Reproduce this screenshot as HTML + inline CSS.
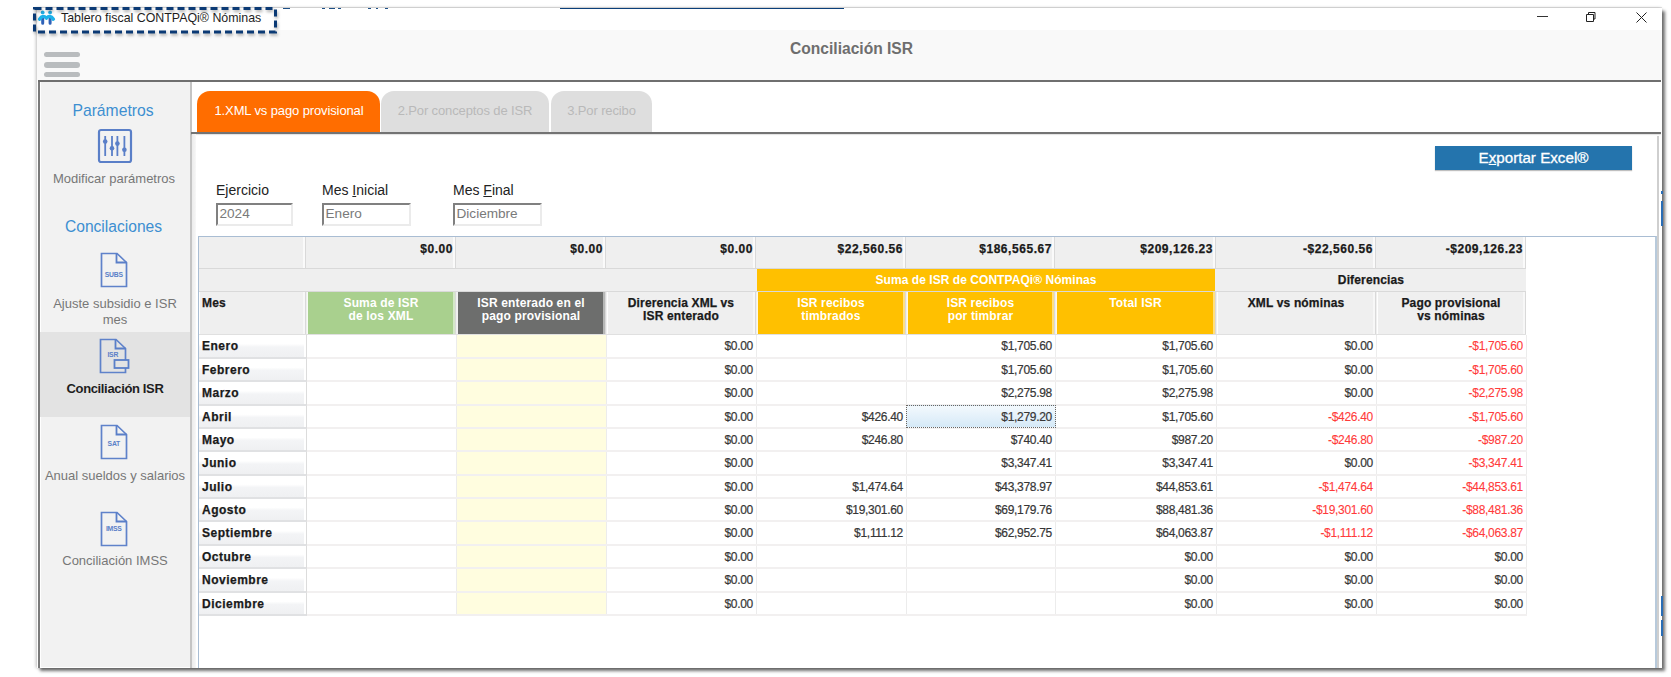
<!DOCTYPE html><html><head><meta charset="utf-8"><style>
*{margin:0;padding:0;box-sizing:border-box}
html,body{width:1671px;height:677px;overflow:hidden;background:#fff;font-family:"Liberation Sans",sans-serif;position:relative}
.a{position:absolute}
.win{left:37px;top:8px;width:1625px;height:660px;background:#fff;box-shadow:-1px 0 3px rgba(0,0,0,.25),3px 3px 3px rgba(0,0,0,.55)}
.hdr{left:37px;top:30px;width:1625px;height:50px;background:#f9f9f9}
.bar{left:44px;width:36px;height:5.5px;background:#b9bcbe;border-radius:3px}
.title{left:790px;top:39.5px;font-size:15.6px;font-weight:bold;color:#6e6e6e;letter-spacing:0;white-space:nowrap}
.topline{left:38px;top:80px;width:1623px;height:2px;background:#6f6f6f}
.side{left:38px;top:82px;width:154px;height:586px;background:#f2f2f2;border-left:2px solid #7a7a7a;border-right:2px solid #c4c4c4;box-shadow:inset 1px 0 0 #fff,inset 0 -1px 0 #fff}
.sel{left:40px;top:332px;width:150px;height:85px;background:#e3e3e3}
.st{white-space:nowrap;text-align:center;color:#777;font-size:13px}
.blue{color:#3d8fd1}
.tab{top:91px;height:41px;border-radius:13px 13px 0 0;font-size:13px;text-align:center;line-height:39px;white-space:nowrap;letter-spacing:-.12px}
.tabline{left:191px;top:132px;width:1470px;height:2px;background:#737373;box-shadow:0 1px 1px rgba(0,0,0,.12)}
.lbl{font-size:14px;color:#222;white-space:nowrap}
.inp{height:23px;border-top:2px solid #808080;border-left:2px solid #808080;border-right:2px solid #ebebeb;border-bottom:2px solid #ebebeb;background:#fff;font-size:13.6px;color:#7a7a7a;padding-left:1.5px;line-height:17px;white-space:nowrap}
.btn{left:1435px;top:146px;width:197px;height:24px;background:#2474ad;color:#fff;font-size:15.2px;-webkit-text-stroke:.3px #fff;text-align:center;line-height:24px;box-shadow:0 1px 1px rgba(0,0,0,.25)}
.grid{left:198px;top:236px;width:1459px;height:432px;border-top:1px solid #a9bdd3;border-left:1px solid #a9bdd3;border-right:2px solid #b8cadb}
.c{position:absolute;white-space:nowrap;overflow:hidden}
.hb{font-weight:bold;font-size:12px;letter-spacing:.55px;color:#1a1a1a;-webkit-text-stroke:.25px}
.d{font-size:12px;letter-spacing:-.3px;color:#363636;-webkit-text-stroke:.2px;text-align:right;padding-right:3px}
.neg{color:#ff3a3a;-webkit-text-stroke:.1px}
.mc{background:linear-gradient(#fff 0,#fff 40%,#f3f4f6 55%,#eff0f2 100%);border-right:1px solid #dcdcdc;border-bottom:2px solid #e0e1e3;box-shadow:inset -2px 0 0 #fff}
</style></head><body>
<div class="a" style="left:37px;top:7px;width:1625px;height:1px;background:#e6e6e6"></div>
<div class="a win"></div>
<div class="a" style="left:560px;top:8px;width:284px;height:1px;background:#0a3f7a"></div>
<div class="a" style="left:283px;top:8px;width:7px;height:1px;background:#1d4f86"></div>
<div class="a" style="left:322px;top:8px;width:3px;height:1px;background:#1d4f86"></div>
<div class="a" style="left:329px;top:8px;width:6px;height:1px;background:#1d4f86"></div>
<div class="a" style="left:338px;top:8px;width:3px;height:1px;background:#1d4f86"></div>
<div class="a" style="left:368px;top:8px;width:3px;height:1px;background:#1d4f86"></div>
<div class="a" style="left:376px;top:8px;width:2px;height:1px;background:#1d4f86"></div>
<div class="a" style="left:385px;top:8px;width:3px;height:1px;background:#1d4f86"></div>
<div class="a" style="left:61px;top:11px;font-size:12.4px;color:#1e1e1e;white-space:nowrap">Tablero fiscal CONTPAQi® Nóminas</div>
<svg class="a" style="left:35px;top:8px" width="24" height="20" viewBox="0 0 24 20">
<path d="M7.7 9.5V15.2M15.1 9.5V15.2" stroke="#2e62b8" stroke-width="3" stroke-linecap="round"/>
<path d="M4.6 11.2Q7.7 6.2 11.4 10.2Q15.1 6.2 18.4 11.2" fill="none" stroke="#1cb2ea" stroke-width="3.4" stroke-linecap="round" stroke-linejoin="round"/>
<circle cx="7.7" cy="4.4" r="1.9" fill="#22b0e8"/><circle cx="15.1" cy="4.4" r="1.9" fill="#22b0e8"/>
</svg>
<div class="a" style="left:1537px;top:16px;width:11px;height:1px;background:#333"></div>
<svg class="a" style="left:1584px;top:11px" width="12" height="12" viewBox="0 0 12 12"><path d="M2.5 3.5h7v7h-7z M4.5 3.5v-2h6.5v6.5h-1.5" fill="none" stroke="#222" stroke-width="1"/></svg>
<svg class="a" style="left:1636px;top:12px" width="11" height="11" viewBox="0 0 11 11"><path d="M0.5 0.5L10.5 10.5M10.5 0.5L0.5 10.5" stroke="#222" stroke-width="1"/></svg>
<div class="a hdr"></div>
<div class="a bar" style="top:51.8px"></div>
<div class="a bar" style="top:62px"></div>
<div class="a bar" style="top:71.8px"></div>
<div class="a title">Conciliación ISR</div>
<div class="a topline"></div>
<div class="a side"></div>
<div class="a sel"></div>
<div class="a st blue" style="left:38px;width:150px;top:101.5px;font-size:15.7px">Parámetros</div>
<svg class="a" style="left:97px;top:128px" width="36" height="36" viewBox="0 0 36 36">
<rect x="2" y="2" width="32" height="32" rx="2" fill="none" stroke="#5a7fc8" stroke-width="2.2"/>
<g stroke="#5a7fc8" stroke-width="1.8"><path d="M8.2 8v20M15 8v20M20.4 8v20M27.4 8v20"/></g>
<g fill="#5a7fc8"><circle cx="8.2" cy="13.5" r="2.3"/><circle cx="15" cy="20.3" r="2.3"/><circle cx="20.4" cy="15.6" r="2.3"/><circle cx="27.4" cy="21.8" r="2.3"/></g>
</svg>
<div class="a st" style="left:39px;width:150px;top:171px">Modificar parámetros</div>
<div class="a st blue" style="left:38.5px;width:150px;top:218px;font-size:15.6px">Concilaciones</div>
<svg class="a" style="left:100px;top:252px" width="28" height="36" viewBox="0 0 28 36">
<path d="M1.5 1.5H17L26.5 10.5V34.5H1.5Z" fill="none" stroke="#5f82ca" stroke-width="1.7"/>
<path d="M16.5 1.5V10.5H26.5" fill="none" stroke="#5a7fc8" stroke-width="1.8"/>
<text x="13.8" y="24.5" font-family="Liberation Sans" font-size="6.8" font-weight="bold" letter-spacing="-.2" fill="#5a7fc8" text-anchor="middle">SUBS</text>
</svg>
<div class="a st" style="left:40px;width:150px;top:296px;line-height:15.6px">Ajuste subsidio e ISR<br>mes</div>
<svg class="a" style="left:99px;top:338px" width="32" height="36" viewBox="0 0 32 36">
<path d="M1.5 1.5H17L26.5 10.5V34.5H1.5Z" fill="none" stroke="#5f82ca" stroke-width="1.7"/>
<path d="M16.5 1.5V10.5H26.5" fill="none" stroke="#5a7fc8" stroke-width="1.8"/>
<text x="13.8" y="18.5" font-family="Liberation Sans" font-size="6.8" font-weight="bold" letter-spacing="-.2" fill="#5a7fc8" text-anchor="middle">ISR</text><rect x="15.5" y="22" width="14" height="8" fill="#e3e3e3" stroke="#5a7fc8" stroke-width="1.8"/>
</svg>
<div class="a st" style="left:40px;width:150px;top:381px;font-weight:bold;color:#1e1e1e;letter-spacing:-.35px">Conciliación ISR</div>
<svg class="a" style="left:100px;top:424px" width="28" height="36" viewBox="0 0 28 36">
<path d="M1.5 1.5H17L26.5 10.5V34.5H1.5Z" fill="none" stroke="#5f82ca" stroke-width="1.7"/>
<path d="M16.5 1.5V10.5H26.5" fill="none" stroke="#5a7fc8" stroke-width="1.8"/>
<text x="13.8" y="21.5" font-family="Liberation Sans" font-size="6.8" font-weight="bold" letter-spacing="-.2" fill="#5a7fc8" text-anchor="middle">SAT</text>
</svg>
<div class="a st" style="left:40px;width:150px;top:468px">Anual sueldos y salarios</div>
<svg class="a" style="left:100px;top:511px" width="28" height="36" viewBox="0 0 28 36">
<path d="M1.5 1.5H17L26.5 10.5V34.5H1.5Z" fill="none" stroke="#5f82ca" stroke-width="1.7"/>
<path d="M16.5 1.5V10.5H26.5" fill="none" stroke="#5a7fc8" stroke-width="1.8"/>
<text x="13.8" y="19.8" font-family="Liberation Sans" font-size="6.8" font-weight="bold" letter-spacing="-.2" fill="#5a7fc8" text-anchor="middle">IMSS</text>
</svg>
<div class="a st" style="left:40px;width:150px;top:553px">Conciliación IMSS</div>
<div class="a tab" style="left:197px;width:183px;padding-left:1px;background:#ff6d00;color:#fff">1.XML vs pago provisional</div>
<div class="a tab" style="left:381px;width:168px;background:#dedede;color:#b9b9b9">2.Por conceptos de ISR</div>
<div class="a tab" style="left:551px;width:101px;background:#dedede;color:#b9b9b9">3.Por recibo</div>
<div class="a tabline"></div>
<div class="a" style="left:192px;top:134px;width:4px;height:534px;background:linear-gradient(90deg,#ececec,#f2f2f2 60%,#f8f8f8)"></div>
<div class="a" style="left:1657px;top:136px;width:2px;height:532px;background:#cfcfcf"></div>
<div class="a lbl" style="left:216px;top:182px">E<u>j</u>ercicio</div>
<div class="a lbl" style="left:322px;top:182px">Mes <u>I</u>nicial</div>
<div class="a lbl" style="left:453px;top:182px">Mes <u>F</u>inal</div>
<div class="a inp" style="left:216px;top:203px;width:77px">2024</div>
<div class="a inp" style="left:322px;top:203px;width:89px">Enero</div>
<div class="a inp" style="left:453px;top:203px;width:89px">Diciembre</div>
<div class="a btn">E<u>x</u>portar Excel®</div>
<div class="a grid"></div>
<div class="c" style="left:199px;top:237px;width:1327px;height:97px;background:#efefef"></div>
<div class="c hb" style="left:199px;top:237px;width:107px;height:31px;text-align:right;padding-right:2px;line-height:24px;border-right:1px solid #d9d9d9;box-shadow:inset -2px 0 0 #fafafa"></div>
<div class="c hb" style="left:306px;top:237px;width:150px;height:31px;text-align:right;padding-right:2px;line-height:24px;border-right:1px solid #d9d9d9;box-shadow:inset -2px 0 0 #fafafa">$0.00</div>
<div class="c hb" style="left:456px;top:237px;width:150px;height:31px;text-align:right;padding-right:2px;line-height:24px;border-right:1px solid #d9d9d9;box-shadow:inset -2px 0 0 #fafafa">$0.00</div>
<div class="c hb" style="left:606px;top:237px;width:150px;height:31px;text-align:right;padding-right:2px;line-height:24px;border-right:1px solid #d9d9d9;box-shadow:inset -2px 0 0 #fafafa">$0.00</div>
<div class="c hb" style="left:756px;top:237px;width:150px;height:31px;text-align:right;padding-right:2px;line-height:24px;border-right:1px solid #d9d9d9;box-shadow:inset -2px 0 0 #fafafa">$22,560.56</div>
<div class="c hb" style="left:906px;top:237px;width:149px;height:31px;text-align:right;padding-right:2px;line-height:24px;border-right:1px solid #d9d9d9;box-shadow:inset -2px 0 0 #fafafa">$186,565.67</div>
<div class="c hb" style="left:1055px;top:237px;width:161px;height:31px;text-align:right;padding-right:2px;line-height:24px;border-right:1px solid #d9d9d9;box-shadow:inset -2px 0 0 #fafafa">$209,126.23</div>
<div class="c hb" style="left:1216px;top:237px;width:160px;height:31px;text-align:right;padding-right:2px;line-height:24px;border-right:1px solid #d9d9d9;box-shadow:inset -2px 0 0 #fafafa">-$22,560.56</div>
<div class="c hb" style="left:1376px;top:237px;width:150px;height:31px;text-align:right;padding-right:2px;line-height:24px;border-right:1px solid #d9d9d9;box-shadow:inset -2px 0 0 #fafafa">-$209,126.23</div>
<div class="c" style="left:199px;top:268px;width:1327px;height:1px;background:#d9d9d9"></div>
<div class="c" style="left:199px;top:291px;width:1327px;height:1px;background:#d9d9d9"></div>
<div class="c" style="left:199px;top:334px;width:1327px;height:1px;background:#e0e0e0"></div>
<div class="c hb" style="left:757px;top:269px;width:458px;height:22px;background:#ffc000;color:#fff;text-align:center;line-height:22px;letter-spacing:.05px;-webkit-text-stroke:0">Suma de ISR de CONTPAQi® Nóminas</div>
<div class="c hb" style="left:1216px;top:269px;width:310px;height:22px;text-align:center;line-height:22px;letter-spacing:.15px">Diferencias</div>
<div class="c hb" style="left:199px;top:292px;width:107px;height:42px;background:#efefef;color:#1a1a1a;text-align:left;padding-left:3px;line-height:13.2px;padding-top:5px;letter-spacing:.15px;border-right:1px solid #d9d9d9;box-shadow:inset 1px 0 0 rgba(255,255,255,.9),inset -2px 0 0 rgba(255,255,255,.5);">Mes</div>
<div class="c hb" style="left:307px;top:292px;width:149px;height:42px;background:#a9d08e;color:#fff;text-align:center;line-height:13.2px;padding-top:5px;letter-spacing:.15px;border-right:1px solid #d9d9d9;box-shadow:inset 1px 0 0 rgba(255,255,255,.9),inset -2px 0 0 rgba(255,255,255,.5);-webkit-text-stroke:0;">Suma de ISR<br>de los XML</div>
<div class="c hb" style="left:457px;top:292px;width:149px;height:42px;background:#6d6e6d;color:#fff;text-align:center;line-height:13.2px;padding-top:5px;letter-spacing:.15px;border-right:1px solid #d9d9d9;box-shadow:inset 1px 0 0 rgba(255,255,255,.9),inset -2px 0 0 rgba(255,255,255,.5);-webkit-text-stroke:0;">ISR enterado en el<br>pago provisional</div>
<div class="c hb" style="left:607px;top:292px;width:149px;height:42px;background:#efefef;color:#1a1a1a;text-align:center;line-height:13.2px;padding-top:5px;letter-spacing:.15px;border-right:1px solid #d9d9d9;box-shadow:inset 1px 0 0 rgba(255,255,255,.9),inset -2px 0 0 rgba(255,255,255,.5);">Direrencia XML vs<br>ISR enterado</div>
<div class="c hb" style="left:757px;top:292px;width:149px;height:42px;background:#ffc000;color:#fff;text-align:center;line-height:13.2px;padding-top:5px;letter-spacing:.15px;border-right:1px solid #d9d9d9;box-shadow:inset 1px 0 0 rgba(255,255,255,.9),inset -2px 0 0 rgba(255,255,255,.5);-webkit-text-stroke:0;">ISR recibos<br>timbrados</div>
<div class="c hb" style="left:907px;top:292px;width:148px;height:42px;background:#ffc000;color:#fff;text-align:center;line-height:13.2px;padding-top:5px;letter-spacing:.15px;border-right:1px solid #d9d9d9;box-shadow:inset 1px 0 0 rgba(255,255,255,.9),inset -2px 0 0 rgba(255,255,255,.5);-webkit-text-stroke:0;">ISR recibos<br>por timbrar</div>
<div class="c hb" style="left:1056px;top:292px;width:160px;height:42px;background:#ffc000;color:#fff;text-align:center;line-height:13.2px;padding-top:5px;letter-spacing:.15px;border-right:1px solid #d9d9d9;box-shadow:inset 1px 0 0 rgba(255,255,255,.9),inset -2px 0 0 rgba(255,255,255,.5);-webkit-text-stroke:0;">Total ISR</div>
<div class="c hb" style="left:1217px;top:292px;width:159px;height:42px;background:#efefef;color:#1a1a1a;text-align:center;line-height:13.2px;padding-top:5px;letter-spacing:.15px;border-right:1px solid #d9d9d9;box-shadow:inset 1px 0 0 rgba(255,255,255,.9),inset -2px 0 0 rgba(255,255,255,.5);">XML vs nóminas</div>
<div class="c hb" style="left:1377px;top:292px;width:149px;height:42px;background:#efefef;color:#1a1a1a;text-align:center;line-height:13.2px;padding-top:5px;letter-spacing:.15px;border-right:1px solid #d9d9d9;box-shadow:inset 1px 0 0 rgba(255,255,255,.9),inset -2px 0 0 rgba(255,255,255,.5);">Pago provisional<br>vs nóminas</div>
<div class="c" style="left:307px;top:335px;width:149px;height:279px;background:#fff"></div>
<div class="c" style="left:457px;top:335px;width:149px;height:279px;background:#fffddf"></div>
<div class="c" style="left:607px;top:335px;width:149px;height:279px;background:#fff"></div>
<div class="c" style="left:757px;top:335px;width:149px;height:279px;background:#fff"></div>
<div class="c" style="left:907px;top:335px;width:148px;height:279px;background:#fff"></div>
<div class="c" style="left:1056px;top:335px;width:160px;height:279px;background:#fff"></div>
<div class="c" style="left:1217px;top:335px;width:159px;height:279px;background:#fff"></div>
<div class="c" style="left:1377px;top:335px;width:149px;height:279px;background:#fff"></div>
<div class="c" style="left:456px;top:335px;width:1px;height:281px;background:#ececec"></div>
<div class="c" style="left:606px;top:335px;width:1px;height:281px;background:#ececec"></div>
<div class="c" style="left:756px;top:335px;width:1px;height:281px;background:#ececec"></div>
<div class="c" style="left:906px;top:335px;width:1px;height:281px;background:#ececec"></div>
<div class="c" style="left:1055px;top:335px;width:1px;height:281px;background:#ececec"></div>
<div class="c" style="left:1216px;top:335px;width:1px;height:281px;background:#ececec"></div>
<div class="c" style="left:1376px;top:335px;width:1px;height:281px;background:#ececec"></div>
<div class="c" style="left:1526px;top:335px;width:1px;height:281px;background:#ececec"></div>
<div class="c" style="left:307px;top:357px;width:1220px;height:2px;background:#f2f0f0"></div>
<div class="c hb mc" style="left:199px;top:335px;width:108px;height:24px;padding-left:3px;line-height:23px;letter-spacing:.5px">Enero</div>
<div class="c d" style="left:607px;top:335px;width:149px;height:22px;line-height:23px">$0.00</div>
<div class="c d" style="left:907px;top:335px;width:148px;height:22px;line-height:23px">$1,705.60</div>
<div class="c d" style="left:1056px;top:335px;width:160px;height:22px;line-height:23px">$1,705.60</div>
<div class="c d" style="left:1217px;top:335px;width:159px;height:22px;line-height:23px">$0.00</div>
<div class="c d neg" style="left:1377px;top:335px;width:149px;height:22px;line-height:23px">-$1,705.60</div>
<div class="c" style="left:307px;top:380px;width:1220px;height:2px;background:#f2f0f0"></div>
<div class="c hb mc" style="left:199px;top:359px;width:108px;height:23px;padding-left:3px;line-height:22px;letter-spacing:.5px">Febrero</div>
<div class="c d" style="left:607px;top:359px;width:149px;height:21px;line-height:22px">$0.00</div>
<div class="c d" style="left:907px;top:359px;width:148px;height:21px;line-height:22px">$1,705.60</div>
<div class="c d" style="left:1056px;top:359px;width:160px;height:21px;line-height:22px">$1,705.60</div>
<div class="c d" style="left:1217px;top:359px;width:159px;height:21px;line-height:22px">$0.00</div>
<div class="c d neg" style="left:1377px;top:359px;width:149px;height:21px;line-height:22px">-$1,705.60</div>
<div class="c" style="left:307px;top:404px;width:1220px;height:2px;background:#f2f0f0"></div>
<div class="c hb mc" style="left:199px;top:382px;width:108px;height:24px;padding-left:3px;line-height:23px;letter-spacing:.5px">Marzo</div>
<div class="c d" style="left:607px;top:382px;width:149px;height:22px;line-height:23px">$0.00</div>
<div class="c d" style="left:907px;top:382px;width:148px;height:22px;line-height:23px">$2,275.98</div>
<div class="c d" style="left:1056px;top:382px;width:160px;height:22px;line-height:23px">$2,275.98</div>
<div class="c d" style="left:1217px;top:382px;width:159px;height:22px;line-height:23px">$0.00</div>
<div class="c d neg" style="left:1377px;top:382px;width:149px;height:22px;line-height:23px">-$2,275.98</div>
<div class="c" style="left:307px;top:427px;width:1220px;height:2px;background:#f2f0f0"></div>
<div class="c hb mc" style="left:199px;top:406px;width:108px;height:23px;padding-left:3px;line-height:22px;letter-spacing:.5px">Abril</div>
<div class="c d" style="left:607px;top:406px;width:149px;height:21px;line-height:22px">$0.00</div>
<div class="c d" style="left:757px;top:406px;width:149px;height:21px;line-height:22px">$426.40</div>
<div class="c d" style="left:907px;top:406px;width:148px;height:21px;line-height:22px">$1,279.20</div>
<div class="c d" style="left:1056px;top:406px;width:160px;height:21px;line-height:22px">$1,705.60</div>
<div class="c d neg" style="left:1217px;top:406px;width:159px;height:21px;line-height:22px">-$426.40</div>
<div class="c d neg" style="left:1377px;top:406px;width:149px;height:21px;line-height:22px">-$1,705.60</div>
<div class="c" style="left:307px;top:450px;width:1220px;height:2px;background:#f2f0f0"></div>
<div class="c hb mc" style="left:199px;top:429px;width:108px;height:23px;padding-left:3px;line-height:22px;letter-spacing:.5px">Mayo</div>
<div class="c d" style="left:607px;top:429px;width:149px;height:21px;line-height:22px">$0.00</div>
<div class="c d" style="left:757px;top:429px;width:149px;height:21px;line-height:22px">$246.80</div>
<div class="c d" style="left:907px;top:429px;width:148px;height:21px;line-height:22px">$740.40</div>
<div class="c d" style="left:1056px;top:429px;width:160px;height:21px;line-height:22px">$987.20</div>
<div class="c d neg" style="left:1217px;top:429px;width:159px;height:21px;line-height:22px">-$246.80</div>
<div class="c d neg" style="left:1377px;top:429px;width:149px;height:21px;line-height:22px">-$987.20</div>
<div class="c" style="left:307px;top:474px;width:1220px;height:2px;background:#f2f0f0"></div>
<div class="c hb mc" style="left:199px;top:452px;width:108px;height:24px;padding-left:3px;line-height:23px;letter-spacing:.5px">Junio</div>
<div class="c d" style="left:607px;top:452px;width:149px;height:22px;line-height:23px">$0.00</div>
<div class="c d" style="left:907px;top:452px;width:148px;height:22px;line-height:23px">$3,347.41</div>
<div class="c d" style="left:1056px;top:452px;width:160px;height:22px;line-height:23px">$3,347.41</div>
<div class="c d" style="left:1217px;top:452px;width:159px;height:22px;line-height:23px">$0.00</div>
<div class="c d neg" style="left:1377px;top:452px;width:149px;height:22px;line-height:23px">-$3,347.41</div>
<div class="c" style="left:307px;top:497px;width:1220px;height:2px;background:#f2f0f0"></div>
<div class="c hb mc" style="left:199px;top:476px;width:108px;height:23px;padding-left:3px;line-height:22px;letter-spacing:.5px">Julio</div>
<div class="c d" style="left:607px;top:476px;width:149px;height:21px;line-height:22px">$0.00</div>
<div class="c d" style="left:757px;top:476px;width:149px;height:21px;line-height:22px">$1,474.64</div>
<div class="c d" style="left:907px;top:476px;width:148px;height:21px;line-height:22px">$43,378.97</div>
<div class="c d" style="left:1056px;top:476px;width:160px;height:21px;line-height:22px">$44,853.61</div>
<div class="c d neg" style="left:1217px;top:476px;width:159px;height:21px;line-height:22px">-$1,474.64</div>
<div class="c d neg" style="left:1377px;top:476px;width:149px;height:21px;line-height:22px">-$44,853.61</div>
<div class="c" style="left:307px;top:520px;width:1220px;height:2px;background:#f2f0f0"></div>
<div class="c hb mc" style="left:199px;top:499px;width:108px;height:23px;padding-left:3px;line-height:22px;letter-spacing:.5px">Agosto</div>
<div class="c d" style="left:607px;top:499px;width:149px;height:21px;line-height:22px">$0.00</div>
<div class="c d" style="left:757px;top:499px;width:149px;height:21px;line-height:22px">$19,301.60</div>
<div class="c d" style="left:907px;top:499px;width:148px;height:21px;line-height:22px">$69,179.76</div>
<div class="c d" style="left:1056px;top:499px;width:160px;height:21px;line-height:22px">$88,481.36</div>
<div class="c d neg" style="left:1217px;top:499px;width:159px;height:21px;line-height:22px">-$19,301.60</div>
<div class="c d neg" style="left:1377px;top:499px;width:149px;height:21px;line-height:22px">-$88,481.36</div>
<div class="c" style="left:307px;top:544px;width:1220px;height:2px;background:#f2f0f0"></div>
<div class="c hb mc" style="left:199px;top:522px;width:108px;height:24px;padding-left:3px;line-height:23px;letter-spacing:.5px">Septiembre</div>
<div class="c d" style="left:607px;top:522px;width:149px;height:22px;line-height:23px">$0.00</div>
<div class="c d" style="left:757px;top:522px;width:149px;height:22px;line-height:23px">$1,111.12</div>
<div class="c d" style="left:907px;top:522px;width:148px;height:22px;line-height:23px">$62,952.75</div>
<div class="c d" style="left:1056px;top:522px;width:160px;height:22px;line-height:23px">$64,063.87</div>
<div class="c d neg" style="left:1217px;top:522px;width:159px;height:22px;line-height:23px">-$1,111.12</div>
<div class="c d neg" style="left:1377px;top:522px;width:149px;height:22px;line-height:23px">-$64,063.87</div>
<div class="c" style="left:307px;top:567px;width:1220px;height:2px;background:#f2f0f0"></div>
<div class="c hb mc" style="left:199px;top:546px;width:108px;height:23px;padding-left:3px;line-height:22px;letter-spacing:.5px">Octubre</div>
<div class="c d" style="left:607px;top:546px;width:149px;height:21px;line-height:22px">$0.00</div>
<div class="c d" style="left:1056px;top:546px;width:160px;height:21px;line-height:22px">$0.00</div>
<div class="c d" style="left:1217px;top:546px;width:159px;height:21px;line-height:22px">$0.00</div>
<div class="c d" style="left:1377px;top:546px;width:149px;height:21px;line-height:22px">$0.00</div>
<div class="c" style="left:307px;top:591px;width:1220px;height:2px;background:#f2f0f0"></div>
<div class="c hb mc" style="left:199px;top:569px;width:108px;height:24px;padding-left:3px;line-height:23px;letter-spacing:.5px">Noviembre</div>
<div class="c d" style="left:607px;top:569px;width:149px;height:22px;line-height:23px">$0.00</div>
<div class="c d" style="left:1056px;top:569px;width:160px;height:22px;line-height:23px">$0.00</div>
<div class="c d" style="left:1217px;top:569px;width:159px;height:22px;line-height:23px">$0.00</div>
<div class="c d" style="left:1377px;top:569px;width:149px;height:22px;line-height:23px">$0.00</div>
<div class="c" style="left:307px;top:614px;width:1220px;height:2px;background:#f2f0f0"></div>
<div class="c hb mc" style="left:199px;top:593px;width:108px;height:23px;padding-left:3px;line-height:22px;letter-spacing:.5px">Diciembre</div>
<div class="c d" style="left:607px;top:593px;width:149px;height:21px;line-height:22px">$0.00</div>
<div class="c d" style="left:1056px;top:593px;width:160px;height:21px;line-height:22px">$0.00</div>
<div class="c d" style="left:1217px;top:593px;width:159px;height:21px;line-height:22px">$0.00</div>
<div class="c d" style="left:1377px;top:593px;width:149px;height:21px;line-height:22px">$0.00</div>
<div class="c" style="left:906px;top:405px;width:150px;height:23px;background:linear-gradient(#f3f9fd,#d5e9f7);border:1px dotted #6b6560"></div>
<div class="c d" style="left:907px;top:406px;width:148px;height:21px;line-height:22px">$1,279.20</div>
<div class="a" style="left:1661px;top:191px;width:2px;height:3px;background:#2a6db5"></div>
<div class="a" style="left:1661px;top:201px;width:2px;height:25px;background:#2a6db5"></div>
<div class="a" style="left:1661px;top:596px;width:2px;height:20px;background:#2a6db5"></div>
<div class="a" style="left:1661px;top:620px;width:2px;height:16px;background:#2a6db5"></div>
<svg class="a" style="left:32px;top:6px;filter:drop-shadow(1px 2px 1.5px rgba(0,0,0,.3))" width="250" height="32" viewBox="0 0 250 32"><rect x="2.5" y="2.5" width="241" height="23.5" fill="none" stroke="#0b3a75" stroke-width="3" stroke-dasharray="7 4"/></svg>
</body></html>
